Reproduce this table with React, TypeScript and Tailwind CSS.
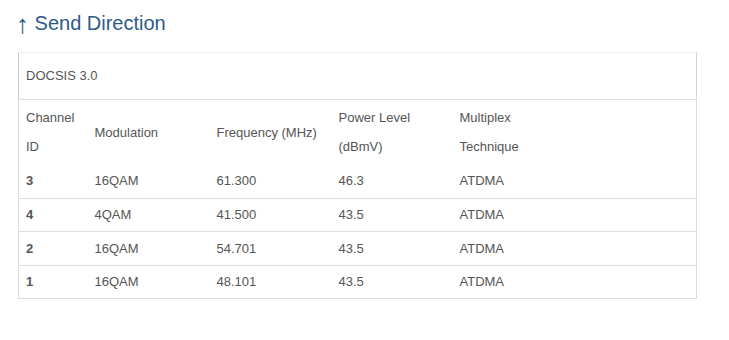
const rows = [
  { id: '3', mod: '16QAM', freq: '61.300', power: '46.3', mux: 'ATDMA' },
  { id: '4', mod: '4QAM', freq: '41.500', power: '43.5', mux: 'ATDMA' },
  { id: '2', mod: '16QAM', freq: '54.701', power: '43.5', mux: 'ATDMA' },
  { id: '1', mod: '16QAM', freq: '48.101', power: '43.5', mux: 'ATDMA' },
];

export default function App() {
  return (
    <div className="min-h-[340px] bg-white px-[18px] pt-[11px] font-['Liberation_Sans',Arial,sans-serif] text-[13px] text-[#555]">
      <h2 className="mb-[17px] h-[24px] text-[20px] leading-[24px] text-[#2d5b89]">
        <span className="-ml-[2px] align-[-3px] text-[26px] leading-[0]">↑</span> Send Direction
      </h2>

      <table className="w-[679px] table-fixed border-collapse">
        <colgroup>
          <col className="w-[69px]" />
          <col className="w-[122px]" />
          <col className="w-[122px]" />
          <col className="w-[121px]" />
          <col />
        </colgroup>
        <thead>
          <tr>
            <th
              colSpan={5}
              className="h-[47px] border-t border-r border-b border-l border-t-[#efefef] border-r-[#d4d4d4] border-b-[#ddd] border-l-[#c8c8c8] px-[7px] text-left font-normal"
            >
              DOCSIS 3.0
            </th>
          </tr>
          <tr className="border-x border-x-[#ddd]">
            <th className="h-[65px] px-[7px] text-left align-middle font-normal leading-[29px]">
              Channel
              <br />
              ID
            </th>
            <th className="px-[7px] text-left align-middle font-normal">Modulation</th>
            <th className="px-[7px] text-left align-middle font-normal">Frequency (MHz)</th>
            <th className="px-[7px] text-left align-middle font-normal leading-[29px]">
              Power Level
              <br />
              (dBmV)
            </th>
            <th className="px-[7px] text-left align-middle font-normal leading-[29px]">
              Multiplex
              <br />
              Technique
            </th>
          </tr>
        </thead>
        <tbody>
          {rows.map((r) => (
            <tr key={r.id} className="h-[33.5px] border-x border-b border-[#ddd]">
              <td className="px-[7px] font-bold">{r.id}</td>
              <td className="px-[7px]">{r.mod}</td>
              <td className="px-[7px]">{r.freq}</td>
              <td className="px-[7px]">{r.power}</td>
              <td className="px-[7px]">{r.mux}</td>
            </tr>
          ))}
        </tbody>
      </table>
    </div>
  );
}
